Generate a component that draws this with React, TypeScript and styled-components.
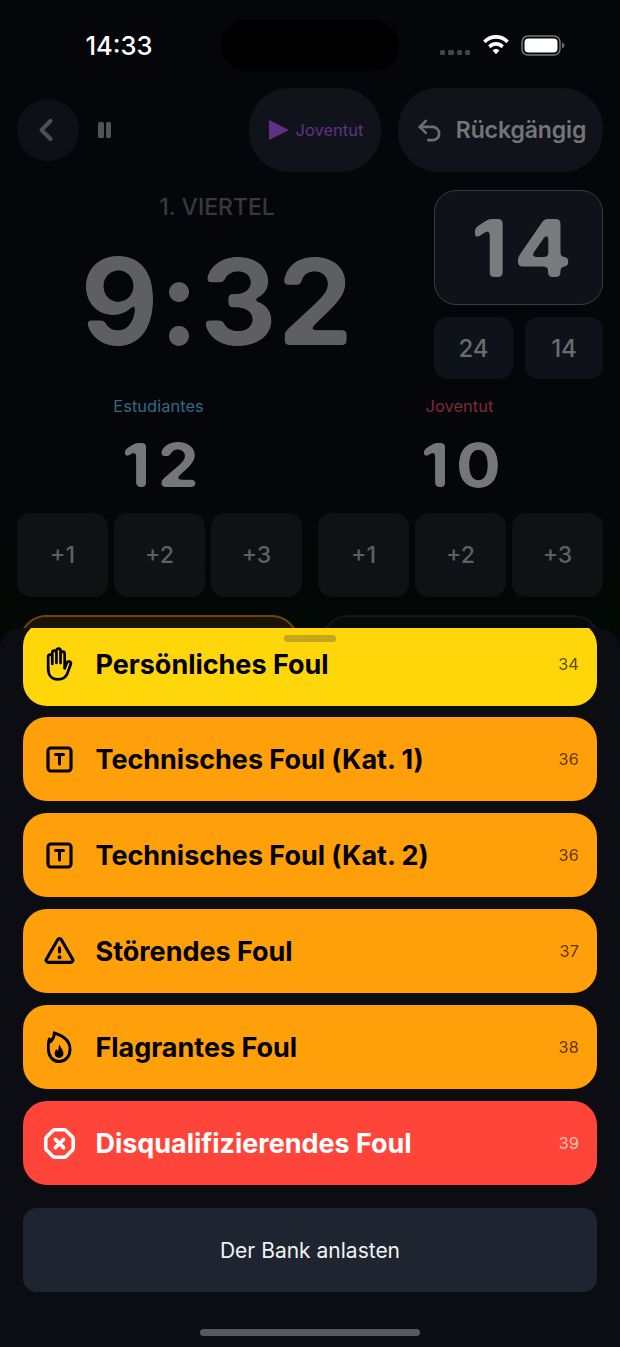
import React from "react";
import styled, { createGlobalStyle } from "styled-components";
import { ChevronLeft, OctagonX, Undo2 } from "lucide-react";
import { PiWarningBold } from "react-icons/pi";
import { IoHandLeftOutline } from "react-icons/io5";

const Global = createGlobalStyle`
  html, body { margin: 0; padding: 0; background: #050609; }
  * { box-sizing: border-box; }
  body { font-family: Inter, "Liberation Sans", sans-serif; }
`;

const Page = styled.div`
  position: relative; width: 620px; height: 1347px; overflow: hidden;
  background: linear-gradient(180deg, #050609 0, #050609 470px, #020803 628px, #020803 100%);
`;
const StatusBar = styled.div`
  height: 88px; display: grid; grid-template-columns: 221px 178px 221px; padding-top: 20px;
`;
const Time = styled.div`
  font-size: 25.500px; font-weight: 500; color: #fff; text-align: right; padding-right: 68.500px;
  line-height: 51px;
`;
const Island = styled.div` height: 51px; border-radius: 26px; background: #000; `;
const StatusIcons = styled.div`
  display: flex; align-items: center; padding-left: 41px; height: 51px;
`;
const Dots = styled.div` display: flex; gap: 3px; margin-top: 13px; margin-right: 12px; `;
const Dot = styled.span` width: 5.300px; height: 5px; border-radius: 1.500px; background: #44454a; `;
const TopRow = styled.div` display: flex; align-items: center; padding: 0 17px; height: 84px; gap: 17px; `;
const BackButton = styled.div`
  width: 62px; height: 62px; border-radius: 50%; background: #0e1015; color: #4c4e54;
  display: flex; align-items: center; justify-content: center; margin-right: 2px; padding-right: 4px;
`;
const PauseIcon = styled.div`
  display: flex; gap: 2px; flex: 1;
  & > span { width: 5.500px; height: 16px; border-radius: 1.500px; background: #50535a; }
`;
const Pill = styled.div<{ $w: number; $shift?: number }>`
  width: ${(p) => p.$w}px; height: 84px; border-radius: 40px; background: #11131a;
  display: flex; align-items: center; justify-content: center; padding-left: ${(p) => p.$shift ?? 0}px;
`;
const TeamPillText = styled.span` font-size: 16.500px; color: #5f3186; margin-left: 7px; `;
const UndoText = styled.span` font-size: 23px; font-weight: 600; color: #737579; margin-left: 12px; letter-spacing: -0.100px; `;
const ClockRow = styled.div` display: flex; gap: 17px; padding: 18px 17px 0; height: 225px; `;
const ClockCol = styled.div` width: 400px; display: flex; flex-direction: column; align-items: center; `;
const Period = styled.div` font-size: 23px; font-weight: 500; color: #37393f; line-height: 34px; `;
const BigClock = styled.div`
  font-size: 120px; font-weight: 700; color: #5e5f63; line-height: 126px; margin-top: 15px; letter-spacing: 0.500px;
  filter: url(#rounded-digits);
`;
const ShotCol = styled.div` width: 169px; display: flex; flex-direction: column; gap: 12px; `;
const ShotMain = styled.div`
  height: 115px; border: 1px solid #3a3c41; border-radius: 22px; background: #0f1219;
  display: flex; align-items: center; justify-content: center;
  color: #7a7b7e;
`;
const ShotValue = styled.span`
  font-size: 80px; font-weight: 700; letter-spacing: 5px; line-height: 1; margin-left: 12px;
  transform: scaleX(1.08); filter: url(#rounded-digits);
`;
const ShotPresets = styled.div` display: grid; grid-template-columns: 79px 78px; gap: 12px; `;
const Preset = styled.div`
  height: 62px; border-radius: 14px; background: #0f1218; color: #6a6c70;
  display: flex; align-items: center; justify-content: center; font-size: 24px; font-weight: 500;
`;
const Teams = styled.div` display: grid; grid-template-columns: 285px 285px; gap: 16px; padding: 0 17px; `;
const Team = styled.div` display: flex; flex-direction: column; align-items: center; `;
const TeamName = styled.div<{ $c: string }>` font-size: 16.500px; color: ${(p) => p.$c}; line-height: 18px; height: 18px; margin-left: -2px; `;
const TeamScore = styled.div`
  font-size: 60px; font-weight: 700; color: #757679; line-height: 70px; height: 98px; padding-top: 15px; letter-spacing: 6px;
  transform: scaleX(1.11); filter: url(#rounded-digits); margin-left: 8px;
`;
const ScoreButtons = styled.div` width: 100%; display: grid; grid-template-columns: repeat(3, 1fr); gap: 6px; `;
const ScoreButton = styled.div`
  height: 84px; border-radius: 14px; background: #0e1215; color: #5d6063;
  display: flex; align-items: center; justify-content: center; font-size: 23px; font-weight: 500;
`;
const FoulRow = styled.div` display: grid; grid-template-columns: 278px 278px; gap: 24px; padding: 18px 20px 0; `;
const FoulCard = styled.div<{ $amber?: boolean }>`
  height: 60px; border-radius: 26px; border: 2px solid ${(p) => (p.$amber ? "#734505" : "#14181a")};
  background: ${(p) => (p.$amber ? "#1b1303" : "#060a08")};
`;
const Sheet = styled.div`
  position: absolute; left: 0; right: 0; top: 628px; bottom: 0; background: #0b0d13;
  border-radius: 20px 20px 0 0; overflow: hidden; padding: 0 23px;
  display: flex; flex-direction: column;
`;
const Handle = styled.div`
  position: absolute; top: 7px; left: 284px; width: 52px; height: 7px; border-radius: 4px;
  background: rgba(60, 60, 67, 0.3);
`;
const FoulList = styled.div` display: flex; flex-direction: column; gap: 12px; margin-top: -6px; `;
const FoulButton = styled.div<{ $bg: string; $fg: string }>`
  height: 84px; border-radius: 24px; background: ${(p) => p.$bg}; color: ${(p) => p.$fg};
  display: flex; align-items: center; padding: 0 18px 0 20px; flex-shrink: 0;
  &:first-child { margin-bottom: -1px; }
`;
const IconSlot = styled.div`
  width: 33px; height: 33px; display: flex; align-items: center; justify-content: center; margin-right: 19.500px;
  & svg.ion path { stroke-width: 42px; }
`;
const FoulLabel = styled.div` flex: 1; font-size: 27px; font-weight: 700; letter-spacing: -0.030px; `;
const FoulCode = styled.div` font-size: 16.500px; opacity: 0.65; margin-top: -1px; `;
const BankButton = styled.div`
  margin-top: 23px; height: 84px; border-radius: 14px; background: #1e2430; color: #f2f3f5;
  display: flex; align-items: center; justify-content: center; font-size: 21px; flex-shrink: 0;
`;
const HomeIndicator = styled.div`
  position: absolute; bottom: 11px; left: 200px; width: 220px; height: 7px; border-radius: 4px; background: #58595c;
`;
const FilterDefs = styled.svg` position: absolute; width: 0; height: 0; `;

const Wifi = () => (
  <svg width="28" height="20" viewBox="0 0 28 21" style={{ marginTop: -1 }}>
    <path d="M14 0C8.9 0 4.3 2 .9 5.4c-.3.3-.3.7 0 1l1.700 1.800c.3.3.7.3 1 0C6.300 5.500 10 3.900 14 3.900s7.700 1.600 10.400 4.300c.3.3.7.3 1 0l1.700-1.800c.3-.3.3-.7 0-1C23.700 2 19.100 0 14 0Z" fill="#fff" />
    <path d="M14 7.300c-3 0-5.800 1.200-7.800 3.200-.3.3-.3.7 0 1l1.700 1.800c.3.3.7.3 1 0 1.300-1.300 3.100-2.100 5.100-2.100s3.800.8 5.100 2.100c.3.3.7.3 1 0l1.700-1.800c.3-.3.3-.7 0-1-2-2-4.800-3.200-7.800-3.200Z" fill="#fff" />
    <path d="M14 14.700c-1.200 0-2.300.5-3.100 1.200-.3.3-.3.7 0 1l2.600 2.800c.3.3.7.3 1 0l2.600-2.800c.3-.3.3-.7 0-1-.8-.7-1.900-1.200-3.100-1.200Z" fill="#fff" />
  </svg>
);
const Battery = () => (
  <svg width="44" height="21" viewBox="0 0 44 21" style={{ marginLeft: 11 }}>
    <rect x="1" y="1" width="38" height="19" rx="6" fill="none" stroke="#77787b" strokeWidth="1.500" />
    <rect x="3.500" y="3.500" width="33" height="14" rx="4" fill="#fff" />
    <path d="M41 7.500c1.500.4 2.500 1.600 2.500 3s-1 2.600-2.500 3Z" fill="#66676a" />
  </svg>
);
const TIcon = ({ color }: { color: string }) => (
  <svg width="33" height="33" viewBox="0 0 33 33" fill="none" stroke={color} strokeLinecap="round" strokeLinejoin="round">
    <rect x="5" y="5" width="23" height="23" rx="3" strokeWidth="3.200" />
    <path d="M12.500 11.500h8M16.500 11.500v9.500" strokeWidth="3" />
  </svg>
);
const FlameIcon = () => (
  <svg width="29" height="33" viewBox="0 0 33 33" preserveAspectRatio="none">
    <path
      d="M10.500 2C11 6.500 8.500 8 6.500 10.500C5 9.800 5 9 5 8C3.500 11 3.800 14 3.800 18C3.800 25.500 9.500 30.500 16 30.500C23 30.500 28.500 25.500 28.500 18.500C28.500 11 22 5 10.500 2Z"
      fill="none" stroke="#000" strokeWidth="3.200" strokeLinejoin="round"
    />
    <path d="M16.500 13C17 16.500 21 18.500 21 22.500C21 25 19 26.800 16 26.800C13 26.800 11 25 11 22.500C11 20.500 12 19.500 13 18C13.500 19 14 19.500 15 19.500C15.500 17 15.500 15 16.500 13Z" fill="#000" />
  </svg>
);

const fouls = [
  { label: "Persönliches Foul", code: "34", bg: "#ffd60a", fg: "#000", icon: <IoHandLeftOutline className="ion" size={36} /> },
  { label: "Technisches Foul (Kat. 1)", code: "36", bg: "#ff9f0a", fg: "#000", icon: <TIcon color="#000" /> },
  { label: "Technisches Foul (Kat. 2)", code: "36", bg: "#ff9f0a", fg: "#000", icon: <TIcon color="#000" /> },
  { label: "Störendes Foul", code: "37", bg: "#ff9f0a", fg: "#000", icon: <PiWarningBold size={34} /> },
  { label: "Flagrantes Foul", code: "38", bg: "#ff9f0a", fg: "#000", icon: <FlameIcon /> },
  { label: "Disqualifizierendes Foul", code: "39", bg: "#ff453a", fg: "#fff", icon: <OctagonX size={35} strokeWidth={2.6} /> },
];

const TeamBlock = ({ name, color, score }: { name: string; color: string; score: number }) => (
  <Team>
    <TeamName $c={color}>{name}</TeamName>
    <TeamScore>{score}</TeamScore>
    <ScoreButtons>
      {[1, 2, 3].map((n) => (
        <ScoreButton key={n}>+{n}</ScoreButton>
      ))}
    </ScoreButtons>
  </Team>
);

export default function App() {
  return (
    <Page>
      <Global />
      <FilterDefs aria-hidden="true">
        <filter id="rounded-digits" colorInterpolationFilters="sRGB">
          <feGaussianBlur stdDeviation="2" />
          <feColorMatrix values="1 0 0 0 0 0 1 0 0 0 0 0 1 0 0 0 0 0 7 -3" />
        </filter>
      </FilterDefs>
      <StatusBar>
        <Time>14:33</Time>
        <Island />
        <StatusIcons>
          <Dots>{[0, 1, 2, 3].map((i) => <Dot key={i} />)}</Dots>
          <Wifi />
          <Battery />
        </StatusIcons>
      </StatusBar>
      <TopRow>
        <BackButton><ChevronLeft size={36} strokeWidth={2.7} /></BackButton>
        <PauseIcon><span /><span /></PauseIcon>
        <Pill $w={132} $shift={2}>
          <svg width="20" height="20" viewBox="0 0 20 20"><path d="M0 0L20 10L0 20Z" fill="#5f3186" /></svg>
          <TeamPillText>Joventut</TeamPillText>
        </Pill>
        <Pill $w={205}>
          <Undo2 size={29} color="#6c6e72" strokeWidth={2.2} />
          <UndoText>Rückgängig</UndoText>
        </Pill>
      </TopRow>
      <ClockRow>
        <ClockCol>
          <Period>1. VIERTEL</Period>
          <BigClock>9:32</BigClock>
        </ClockCol>
        <ShotCol>
          <ShotMain><ShotValue>14</ShotValue></ShotMain>
          <ShotPresets>
            <Preset>24</Preset>
            <Preset>14</Preset>
          </ShotPresets>
        </ShotCol>
      </ClockRow>
      <Teams>
        <TeamBlock name="Estudiantes" color="#2f6a83" score={12} />
        <TeamBlock name="Joventut" color="#7f2a3b" score={10} />
      </Teams>
      <FoulRow>
        <FoulCard $amber />
        <FoulCard />
      </FoulRow>
      <Sheet>
        <FoulList>
          {fouls.map((f, i) => (
            <FoulButton key={i} $bg={f.bg} $fg={f.fg}>
              <IconSlot>{f.icon}</IconSlot>
              <FoulLabel>{f.label}</FoulLabel>
              <FoulCode>{f.code}</FoulCode>
            </FoulButton>
          ))}
        </FoulList>
        <BankButton>Der Bank anlasten</BankButton>
        <Handle />
      </Sheet>
      <HomeIndicator />
    </Page>
  );
}
